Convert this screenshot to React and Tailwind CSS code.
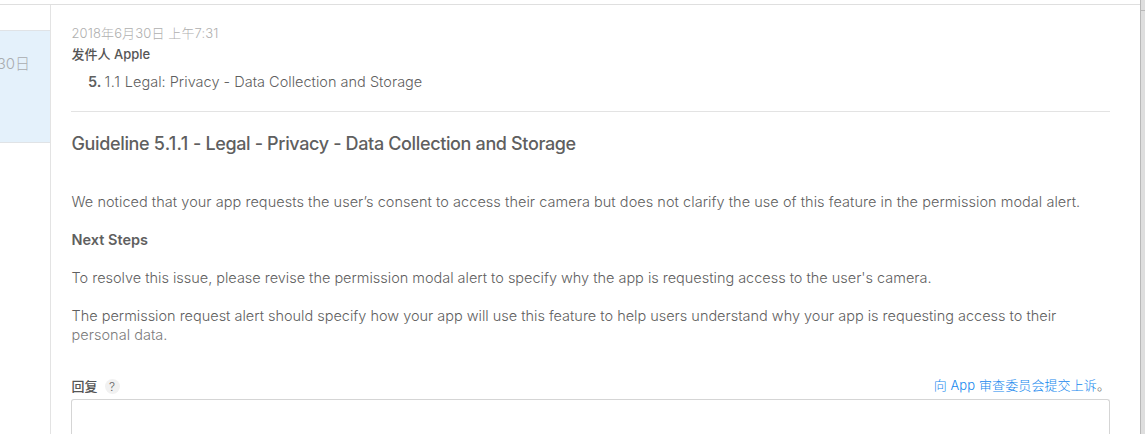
const FONT = "font-['Inter','Noto_Sans_CJK_SC',sans-serif]";

function Sidebar() {
  return (
    <aside className="flex w-[51px] shrink-0 flex-col border-r border-[#e3e3e3]">
      <div className="h-[25px]" />
      <div className="flex h-[113px] justify-end overflow-hidden border-y border-[#e0e3e6] bg-[#e4f1fb] pt-[22px] pr-[20px]">
        <span className="text-[15px] leading-[22px] font-light whitespace-nowrap text-[#a9acaf]">6月30日</span>
      </div>
    </aside>
  );
}

function Message() {
  return (
    <article className="text-[14.5px] font-light text-[#5f5f5f]">
      <header className="h-[107px] border-b border-[#e3e3e3] pt-[18px]">
        <p className="h-[21px] pl-[0.5px] text-[13px] leading-[20px] tracking-[0.12px] whitespace-nowrap text-[#afafaf]">2018年6月30日 上午7:31</p>
        <p className="h-[24px] pl-[0.5px] text-[13px] leading-[20px] font-medium whitespace-nowrap text-[#555]">发件人 Apple</p>
        <p className="flex gap-[3px] pl-[17px] text-[14.5px] leading-[28px] whitespace-nowrap">
          <b className="font-semibold">5.</b>
          <span className="tracking-[0.01px]"><span className="tracking-[0.7px]">1.1</span> Legal: Privacy - Data Collection and Storage</span>
        </p>
      </header>
      <h1 className="mt-[20px] h-[60px] pl-[0.5px] text-[18px] leading-[24px] font-medium tracking-[-0.36px] whitespace-nowrap text-[#5f5f5f]">
        Guideline <span className="tracking-[0.3px]">5.1.1</span> - Legal - Privacy - Data Collection and Storage
      </h1>
      <div className="pl-[0.5px]">
        <p className="h-[38px] leading-[19px] tracking-[0.042px] whitespace-nowrap">
          We noticed that your app requests the user’s consent to access their camera but does not clarify the use of this feature in the permission modal alert.
        </p>
        <h2 className="h-[38px] leading-[19px] font-semibold whitespace-nowrap">Next Steps</h2>
        <p className="h-[38px] leading-[19px] tracking-[-0.018px] whitespace-nowrap">
          To resolve this issue, please revise the permission modal alert to specify why the app is requesting access to the user's camera.
        </p>
        <p className="h-[38px] leading-[19px] tracking-[-0.012px] whitespace-nowrap">
          The permission request alert should specify how your app will use this feature to help users understand why your app is requesting access to their
          <br />
          <span className="tracking-[0.03px] text-[#7c7c7c]">personal data.</span>
        </p>
      </div>
    </article>
  );
}

function Reply() {
  return (
    <section className="mt-[32px] flex min-h-0 flex-1 flex-col">
      <div className="flex h-[23px] shrink-0 items-start justify-between text-[13px] leading-[20px]">
        <div className="flex items-center gap-[7px] pl-[0.5px]">
          <span className="font-medium text-[#555]">回复</span>
          <span className="flex size-[15px] items-center justify-center rounded-full bg-[#f1f1f1] text-[12px] leading-[15px] font-light text-[#666]">?</span>
        </div>
        <div className="leading-[18px] font-light tracking-[0.1px] whitespace-nowrap text-[#666]">
          <a className="text-[#1487ee]">向 App 审查委员会提交上诉</a>。
        </div>
      </div>
      <div className="flex-1 rounded-t-[3px] border border-b-0 border-[#d5d5d5]" />
    </section>
  );
}

export default function App() {
  return (
    <div className={`flex h-[434px] w-[1145px] overflow-hidden bg-white ${FONT}`}>
      <div className="flex min-w-0 flex-1 flex-col">
        <div className="h-[5px] shrink-0 border-b border-[#dfdfdf]" />
        <div className="flex min-h-0 flex-1">
          <Sidebar />
          <main className="flex min-w-0 flex-1 flex-col pr-[30px] pl-[20px]">
            <Message />
            <Reply />
          </main>
        </div>
      </div>
      <div className="w-[5px] shrink-0 border-l border-[#b8b8b8] bg-[#dedede] pt-[10px]">
        <div className="h-px bg-[#b8b8b8]" />
      </div>
    </div>
  );
}
